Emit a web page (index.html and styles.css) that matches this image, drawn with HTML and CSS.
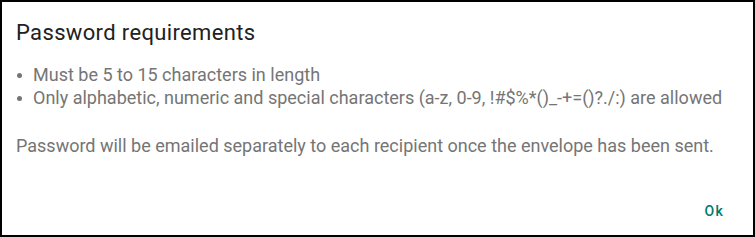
FILE: index.html
```html
<!DOCTYPE html>
<html lang="en">
    <head>
        <meta charset="UTF-8">
        <meta name="viewport" content="width=device-width, initial-scale=1.0">
        <title>Password requirements</title>
        <link rel="stylesheet" href="styles.css">
    </head>
    <body>
        <div class="dialog">
            <h2 class="dialog_title">Password requirements</h2>
            <div class="dialog_content">
                <ul class="rules">
                    <li>Must be 5 to 15 characters in length</li>
                    <li>Only alphabetic, numeric and special characters (a-z, 0-9, !#$%*()_-+=()?./:) are allowed</li>
                </ul>
                <p class="note">Password will be emailed separately to each recipient once the envelope has been sent.</p>
            </div>
            <div class="actions">
                <button class="btn">Ok</button>
            </div>
        </div>
    </body>
</html>
```

FILE: styles.css
```css
html, body {
    margin: 0;
    padding: 0;
    background: #fff;
}

.dialog {
    --title-color: #212121;
    --text-color: #757575;
    --accent-color: #00796b;
    box-sizing: border-box;
    width: 755px;
    height: 237px;
    border: 2px solid #000;
    display: flex;
    flex-direction: column;
    font-family: Roboto, "Liberation Sans", sans-serif;
}

.dialog_title {
    margin: 0;
    padding: 16px 14px 0;
    font-size: 22px;
    font-weight: 400;
    line-height: 29px;
    letter-spacing: 0.35px;
    color: var(--title-color);
}

.dialog_content {
    padding: 0 14px;
    color: var(--text-color);
    font-size: 18px;
    line-height: 23px;
}

.rules {
    margin: 16px 0 0;
    padding: 0;
    list-style: none;
}

.rules li {
    display: flex;
    align-items: baseline;
}

.rules li::before {
    content: "";
    flex: none;
    width: 5px;
    height: 5px;
    border-radius: 50%;
    background: currentColor;
    margin: 0 11px 0 1px;
    transform: translateY(-3px);
}

.note {
    margin: 25px 0 0;
}

.actions {
    margin-top: auto;
    display: flex;
    justify-content: flex-end;
    padding: 0 21px 8px;
}

.btn {
    background: none;
    border: none;
    padding: 6px 8px;
    font-family: inherit;
    font-size: 14px;
    font-weight: 500;
    line-height: 20px;
    letter-spacing: 1.25px;
    color: var(--accent-color);
}
```
